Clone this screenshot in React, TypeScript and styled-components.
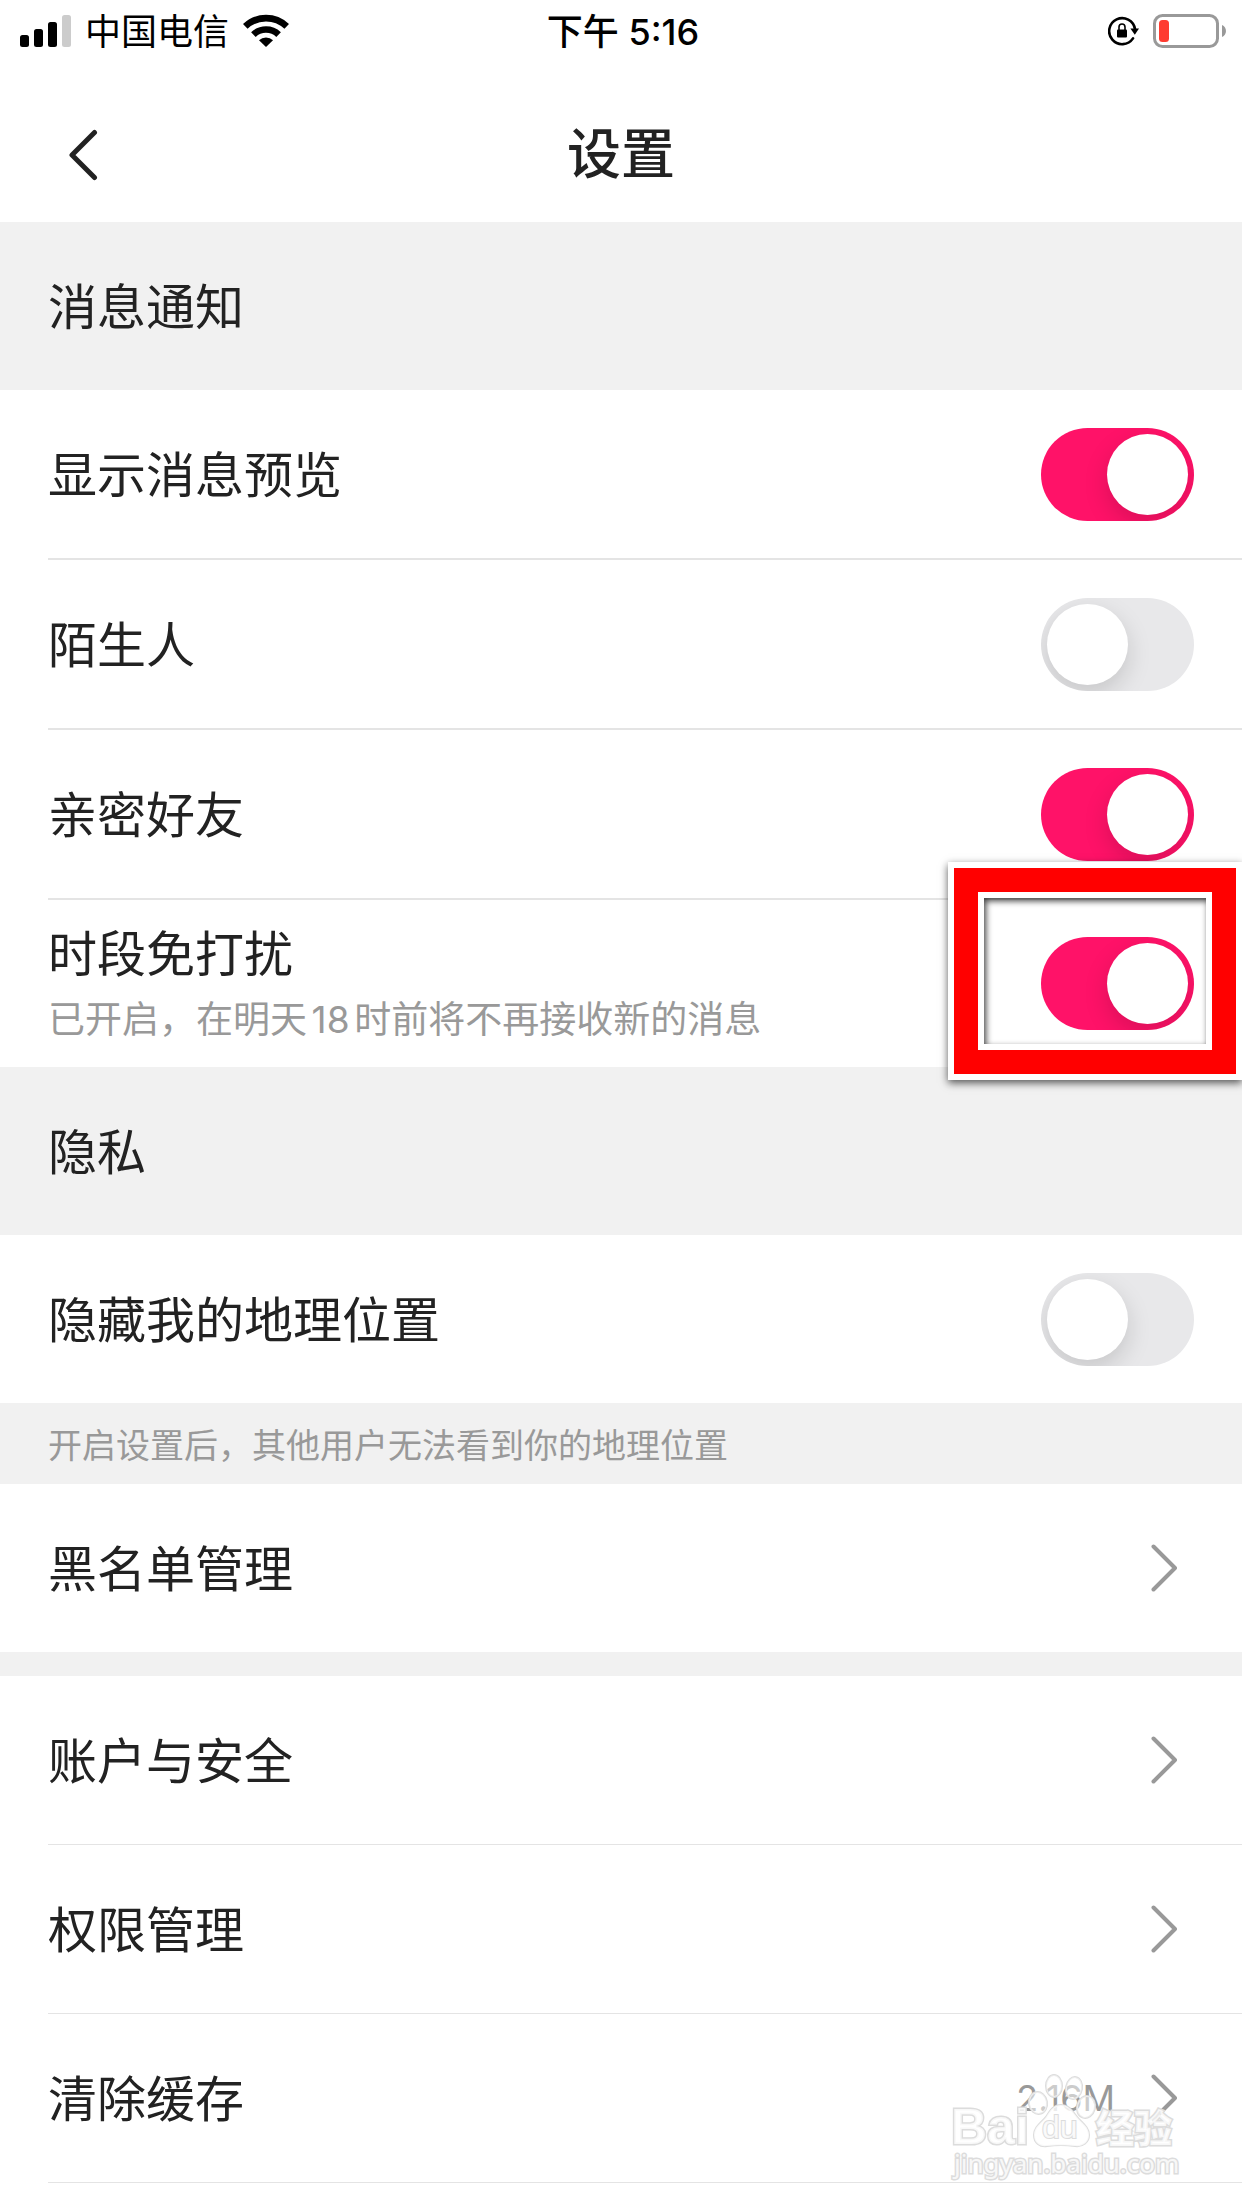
import React, { useState } from 'react';
import styled, { createGlobalStyle } from 'styled-components';

const colors = {
  text: '#222222',
  muted: '#999999',
  surface: '#ffffff',
  band: '#f1f1f1',
  line: '#e4e4e4',
  accent: '#ff1268',
  off: '#e8e8ea',
};

const GlobalStyle = createGlobalStyle`
  *, *::before, *::after { box-sizing: border-box; }
  body {
    margin: 0;
    background: ${colors.surface};
    color: ${colors.text};
    font-family: Inter, "Noto Sans CJK SC", sans-serif;
    text-autospace: normal;
    overflow-x: hidden;
  }
`;

const Screen = styled.div`
  position: relative;
  display: flex;
  flex-direction: column;
  min-height: 100vh;
  overflow: hidden;
  background: ${colors.surface};
`;

const StatusBar = styled.div`
  display: grid;
  grid-template-columns: 1fr auto 1fr;
  align-items: center;
  height: 60px;
  padding: 0 16px 0 20px;
  color: #000;
`;

const StatusGroup = styled.div<{ $end?: boolean }>`
  display: flex;
  align-items: center;
  justify-content: ${(p) => (p.$end ? 'flex-end' : 'flex-start')};
  gap: 14px;
`;

const Carrier = styled.span`
  padding-top: 2px;
  font-size: 36px;
  line-height: 60px;
  font-weight: 400;
`;

const Clock = styled.time`
  padding-top: 2px;
  font-size: 36px;
  line-height: 60px;
  font-weight: 500;
  text-autospace: no-autospace;
`;

const Header = styled.header`
  display: grid;
  grid-template-columns: 1fr auto 1fr;
  align-items: center;
  height: 162px;
  padding: 28px 48px 0;
`;

const BackButton = styled.button`
  justify-self: start;
  display: flex;
  padding: 0 20px;
  border: 0;
  background: none;
  color: ${colors.text};
  cursor: pointer;
`;

const Title = styled.h1`
  margin: 0;
  font-size: 54px;
  line-height: 72px;
  font-weight: 500;
`;

const SectionTitle = styled.h2`
  display: flex;
  align-items: center;
  height: 168px;
  margin: 0;
  padding: 4px 48px 0;
  background: ${colors.band};
  font-size: 49px;
  line-height: 60px;
  font-weight: 400;
`;

const Group = styled.div`
  display: flex;
  flex-direction: column;
`;

const Row = styled.div<{ $line?: number; $height?: number }>`
  position: relative;
  display: flex;
  align-items: center;
  justify-content: space-between;
  height: ${(p) => (p.$height ?? 168) + (p.$line ?? 0)}px;
  margin-left: 48px;
  padding-right: 48px;
  border-bottom: ${(p) => p.$line ?? 0}px solid ${colors.line};
`;

const LinkRow = styled(Row).attrs({ as: 'a' })<{ href: string }>`
  padding-right: 64px;
  color: inherit;
  text-decoration: none;
`;

const LabelStack = styled.div`
  display: flex;
  flex-direction: column;
  gap: 8px;
  padding-top: 4px;
`;

const RowLabel = styled.label`
  font-size: 49px;
  line-height: 60px;
  font-weight: 400;
`;

const Description = styled.span`
  color: ${colors.muted};
  font-size: 37px;
  line-height: 54px;
  font-weight: 400;
`;

const Note = styled.p`
  height: 81px;
  margin: 0;
  padding: 2px 48px 0;
  background: ${colors.band};
  color: ${colors.muted};
  font-size: 34px;
  line-height: 81px;
  font-weight: 400;
`;

const Spacer = styled.div`
  height: 24px;
  background: ${colors.band};
`;

const Trailing = styled.span`
  display: flex;
  align-items: center;
  gap: 36px;
  color: ${colors.muted};
  font-size: 36px;
  line-height: 48px;
  font-weight: 400;
`;

const Track = styled.span`
  display: flex;
  width: 153px;
  height: 93px;
  border-radius: 47px;
  overflow: hidden;
`;

const SwitchInput = styled.input`
  appearance: none;
  display: flex;
  flex: 1;
  margin: 0;
  padding: 6px;
  background: ${colors.off};
  cursor: pointer;

  &::before {
    content: '';
    width: 81px;
    height: 81px;
    border-radius: 50%;
    background: #fff;
    box-shadow: 0 9px 24px rgba(0, 0, 0, 0.15);
  }

  &:checked {
    justify-content: flex-end;
    background: ${colors.accent};
  }
`;

const Highlight = styled.div`
  position: absolute;
  top: -38px;
  right: 0;
  bottom: -13px;
  width: 294px;
  border: 6px solid #fff;
  box-shadow: 0 3px 8px rgba(0, 0, 0, 0.65);
  pointer-events: none;
  z-index: 1;

  &::before {
    content: '';
    position: absolute;
    inset: 0;
    border: 24px solid #f00;
  }

  &::after {
    content: '';
    position: absolute;
    inset: 24px;
    border: 6px solid #fff;
  }
`;

const HighlightShade = styled.span`
  position: absolute;
  inset: 30px;
  box-shadow: inset 2px 3px 6px rgba(0, 0, 0, 0.75);
`;

const Watermark = styled.svg`
  position: absolute;
  right: 60px;
  bottom: -2px;
  pointer-events: none;
`;

function SignalIcon() {
  return (
    <svg width="51" height="32" viewBox="0 0 51 32" aria-hidden="true">
      <rect x="0" y="20" width="9" height="12" rx="2.5" />
      <rect x="14" y="14" width="9" height="18" rx="2.5" />
      <rect x="28" y="7" width="9" height="25" rx="2.5" />
      <rect x="42" y="0" width="9" height="32" rx="2.5" fill="#ccc" />
    </svg>
  );
}

function WifiIcon() {
  return (
    <svg width="46" height="34" viewBox="0 0 46 34" aria-hidden="true">
      <g fill="none" stroke="#000" strokeWidth="6.6">
        <path d="M2.3 12.4A30 30 0 0 1 43.7 12.4" />
        <path d="M10.4 20.6A18.2 18.2 0 0 1 35.6 20.6" />
      </g>
      <path d="M23 33 16 26.3A10 10 0 0 1 30 26.3Z" />
    </svg>
  );
}

function RotationLockIcon() {
  return (
    <svg width="31" height="30" viewBox="0 0 31 30" aria-hidden="true">
      <path d="M25 22.4A13 13 0 1 1 27 13" fill="none" stroke="#000" strokeWidth="2.6" strokeLinecap="round" />
      <path d="M22.4 12.6H31L26.8 18.8Z" />
      <rect x="9" y="13.6" width="10" height="8" rx="1" />
      <path d="M11 14V11a3 3 0 0 1 6 0v3" fill="none" stroke="#000" strokeWidth="1.6" />
    </svg>
  );
}

function BatteryIcon() {
  return (
    <svg width="73" height="34" viewBox="0 0 73 34" aria-hidden="true">
      <rect x="1.5" y="1.5" width="63" height="31" rx="8" fill="none" stroke="#999" strokeWidth="3" />
      <rect x="6" y="6" width="10" height="22" rx="3.5" fill="#ff3b30" />
      <path d="M69 11C74.300 13 74.300 21 69 23Z" fill="#999" />
    </svg>
  );
}

function BackIcon() {
  return (
    <svg width="30" height="52" viewBox="0 0 30 52" fill="none" aria-hidden="true">
      <path d="M26.500 3.500 4 26 26.500 48.500" stroke="currentColor" strokeWidth="5" strokeLinecap="round" strokeLinejoin="round" />
    </svg>
  );
}

function ChevronIcon() {
  return (
    <svg width="27" height="48" viewBox="0 0 27 48" fill="none" aria-hidden="true">
      <path d="M2.500 2.500 24 24 2.500 45.500" stroke={colors.muted} strokeWidth="4" strokeLinecap="round" strokeLinejoin="round" />
    </svg>
  );
}

function BaiduMark() {
  return (
    <Watermark width="232" height="160" viewBox="0 0 232 160" role="img" aria-label="Baidu 经验">
      <g fill="#fff" stroke="#dcdcdc" strokeWidth="2" fillOpacity="0.8" paintOrder="stroke">
        <g fillOpacity="0.5">
          <ellipse cx="88" cy="53" rx="9" ry="11" transform="rotate(-10 88 53)" />
          <ellipse cx="104" cy="36" rx="8" ry="11" />
          <ellipse cx="124" cy="38" rx="8" ry="11" transform="rotate(10 124 38)" />
          <ellipse cx="136" cy="57" rx="9" ry="11" transform="rotate(15 136 57)" />
        </g>
        <path d="M111 55c-8 0-11 6-15 12-5 6-12 10-12 18 0 8 6 12 13 11 8-1 20-1 28 0 8 1 14-4 14-11 0-8-7-12-12-18-5-6-8-12-16-12Z" />
        <text x="1" y="94" fontFamily="'Liberation Sans', sans-serif" fontSize="50" fontWeight="700" strokeWidth="3">Bai</text>
        <text x="92" y="88" fontFamily="'Liberation Sans', sans-serif" fontSize="32" fontWeight="400">du</text>
        <text x="146" y="92" fontFamily="'Noto Sans CJK SC', sans-serif" fontSize="38" fontWeight="900" strokeWidth="3">经验</text>
        <text x="4" y="123" fontFamily="'Noto Sans', sans-serif" fontSize="26" fontWeight="400" strokeWidth="3">jingyan.baidu.com</text>
      </g>
    </Watermark>
  );
}

interface SwitchRowProps {
  id: string;
  label: string;
  description?: string;
  initial?: boolean;
  line?: number;
  height?: number;
  highlighted?: boolean;
}

function SwitchRow({ id, label, description, initial = false, line, height, highlighted }: SwitchRowProps) {
  const [on, setOn] = useState(initial);
  return (
    <Row $line={line} $height={height}>
      <LabelStack>
        <RowLabel htmlFor={id}>{label}</RowLabel>
        {description && <Description>{description}</Description>}
      </LabelStack>
      <Track>
        <SwitchInput id={id} type="checkbox" role="switch" checked={on} onChange={(e) => setOn(e.target.checked)} />
      </Track>
      {highlighted && (
        <Highlight>
          <HighlightShade />
        </Highlight>
      )}
    </Row>
  );
}

function NavRow({ href, label, value, line }: { href: string; label: string; value?: string; line?: number }) {
  return (
    <LinkRow href={href} $line={line}>
      <LabelStack>
        <RowLabel as="span">{label}</RowLabel>
      </LabelStack>
      <Trailing>
        {value}
        <ChevronIcon />
      </Trailing>
    </LinkRow>
  );
}

export default function App() {
  return (
    <>
      <GlobalStyle />
      <Screen>
        <StatusBar>
          <StatusGroup>
            <SignalIcon />
            <Carrier>中国电信</Carrier>
            <WifiIcon />
          </StatusGroup>
          <Clock>下午 5:16</Clock>
          <StatusGroup $end>
            <RotationLockIcon />
            <BatteryIcon />
          </StatusGroup>
        </StatusBar>
        <Header>
          <BackButton type="button" aria-label="返回">
            <BackIcon />
          </BackButton>
          <Title>设置</Title>
        </Header>
        <main>
          <SectionTitle>消息通知</SectionTitle>
          <Group>
            <SwitchRow id="preview" label="显示消息预览" initial line={2} />
            <SwitchRow id="strangers" label="陌生人" line={2} />
            <SwitchRow id="friends" label="亲密好友" initial line={2} />
            <SwitchRow
              id="quiet"
              label="时段免打扰"
              description="已开启，在明天18时前将不再接收新的消息"
              initial
              height={167}
              highlighted
            />
          </Group>
          <SectionTitle>隐私</SectionTitle>
          <Group>
            <SwitchRow id="location" label="隐藏我的地理位置" />
          </Group>
          <Note>开启设置后，其他用户无法看到你的地理位置</Note>
          <Group>
            <NavRow href="#blacklist" label="黑名单管理" />
          </Group>
          <Spacer />
          <Group>
            <NavRow href="#account" label="账户与安全" line={1} />
            <NavRow href="#permissions" label="权限管理" line={1} />
            <NavRow href="#cache" label="清除缓存" value="2.16M" line={1} />
          </Group>
        </main>
        <BaiduMark />
      </Screen>
    </>
  );
}
